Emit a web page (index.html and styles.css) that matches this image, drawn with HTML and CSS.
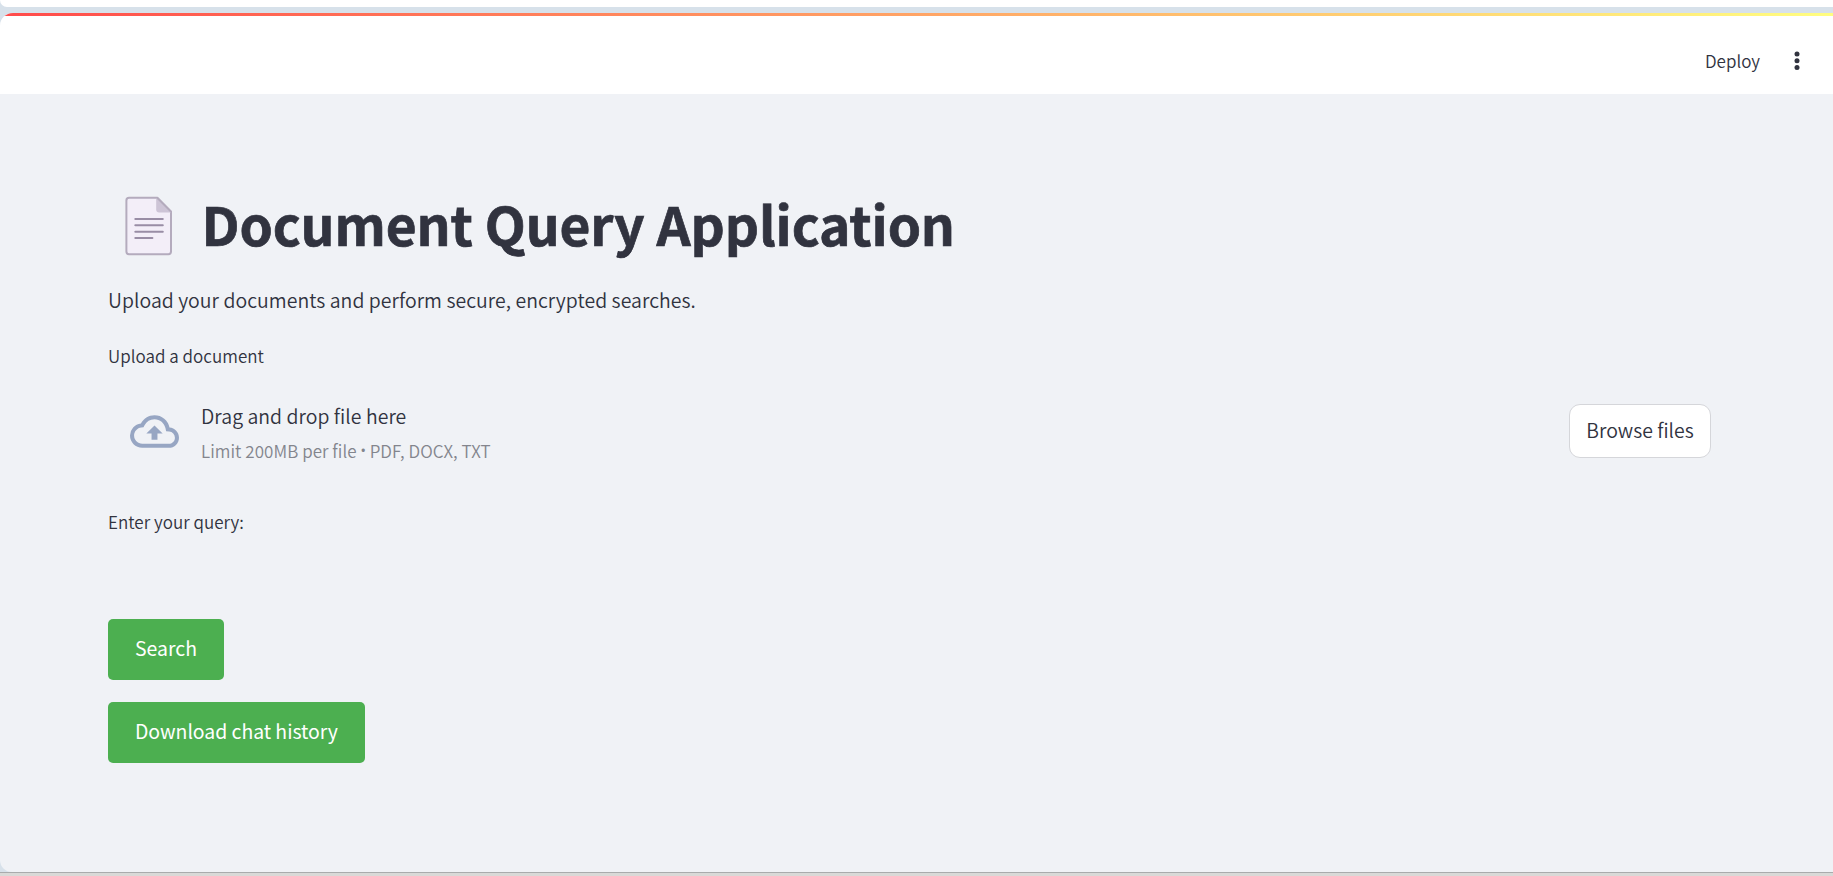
FILE: index.html
```html
<!DOCTYPE html>
<html lang="en">
<head>
<meta charset="utf-8">
<title>Document Query Application</title>
<link rel="stylesheet" href="styles.css">
</head>
<body>
<div class="browser-edge"></div>
<div class="app">
  <div class="decoration"></div>
  <header class="toolbar">
    <span class="deploy">Deploy</span>
    <svg class="menu" viewBox="0 0 6 20"><circle cx="3" cy="3" r="2.5"/><circle cx="3" cy="9.8" r="2.5"/><circle cx="3" cy="16.6" r="2.5"/></svg>
  </header>
  <main class="content">
    <div class="heading">
      <svg class="doc-icon" viewBox="0 0 48 60">
        <path d="M4 1.8H32.2L46 15.6V55.6Q46 58.2 43.4 58.2H4Q1.4 58.2 1.4 55.6V4.4Q1.4 1.8 4 1.8Z" fill="#f3eef8" stroke="#b4abbd" stroke-width="2"/>
        <path d="M31.2 2L46 16.6H34.2Q31.2 16.6 31.2 13.6Z" fill="#cdc4d6"/>
        <path d="M32.2 1.8L46 15.6" stroke="#b4abbd" stroke-width="2"/>
        <path d="M10.3 23H37.8M10.3 29.3H37.8M10.3 35.7H37.8M10.3 42H27.4" stroke="#998da5" stroke-width="2" stroke-linecap="round"/>
      </svg>
      <h1 class="title">Document Query Application</h1>
    </div>
    <p class="subtitle">Upload your documents and perform secure, encrypted searches.</p>
    <label class="label label-upload">Upload a document</label>
    <section class="dropzone">
      <svg class="cloud" viewBox="0 4 24 16"><path d="M19.35 10.04A7.49 7.49 0 0 0 12 4C9.11 4 6.6 5.64 5.35 8.04A5.994 5.994 0 0 0 0 14c0 3.31 2.69 6 6 6h13c2.76 0 5-2.24 5-5 0-2.64-2.05-4.78-4.65-4.96zM19 18H6c-2.21 0-4-1.79-4-4 0-2.05 1.53-3.76 3.56-3.97l1.07-.11.5-.95A5.469 5.469 0 0 1 12 6c2.62 0 4.88 1.86 5.39 4.43l.3 1.5 1.53.11A2.98 2.98 0 0 1 22 15c0 1.65-1.35 3-3 3zM8 13h2.55v3h2.9v-3H16l-4-4z"/></svg>
      <div class="drop-text">
        <span class="drop-title">Drag and drop file here</span>
        <span class="drop-limit">Limit 200MB per file <span class="bullet">•</span> PDF, DOCX, TXT</span>
      </div>
      <button class="browse">Browse files</button>
    </section>
    <label class="label label-query">Enter your query:</label>
    <div class="actions">
      <button class="action search">Search</button>
      <button class="action download">Download chat history</button>
    </div>
  </main>
</div>
<div class="taskbar-edge"></div>
</body>
</html>
```
FILE: styles.css
```css
* { box-sizing: border-box; }
body {
  margin: 0;
  height: 876px;
  overflow: hidden;
  display: flex;
  flex-direction: column;
  background: #d7e1ea;
  color: #31333f;
  font-family: "Noto Sans CJK SC", "Noto Sans", sans-serif;
  font-weight: 350;
}
.browser-edge {
  height: 7px;
  margin-bottom: 6px;
  background: #fff;
  border-radius: 0 0 0 11px;
}
.app {
  height: 859px;
  background: #f0f2f6;
  border-radius: 13px 0 0 12px;
  overflow: hidden;
}
.decoration {
  height: 3px;
  background: linear-gradient(90deg, #ff4b4b, #fffd80);
}
.toolbar {
  height: 78px;
  padding: 33px 33px 0 0;
  background: #fff;
  display: flex;
  justify-content: flex-end;
  align-items: flex-start;
}
.deploy { font-size: 17px; line-height: 24px; margin-right: 34px; }
.menu { width: 6px; height: 20px; margin-top: 2px; fill: #31333f; }
.content { padding: 93px 122px 0 108px; }
.heading { display: flex; height: 72px; }
.doc-icon { width: 48px; height: 60px; margin: 9px 0 0 17px; fill: none; flex: none; }
.title {
  margin: 0 0 0 28.5px;
  font-size: 53.3px;
  line-height: 72px;
  font-weight: 700;
  letter-spacing: -0.14px;
  -webkit-text-stroke: 0.7px #31333f;
  white-space: nowrap;
}
.subtitle { margin: 24px 0 0; font-size: 19.45px; line-height: 34px; letter-spacing: 0.05px; }
.label { display: block; width: fit-content; font-size: 17px; line-height: 24px; letter-spacing: 0.03px; }
.label-upload { margin-top: 27px; }
.dropzone { display: flex; margin-top: 31px; height: 67px; }
.cloud { width: 49px; height: 33px; margin: 16px 22px 0 22px; fill: #97a6c3; flex: none; }
.drop-text { display: flex; flex-direction: column; align-items: flex-start; }
.drop-title { font-size: 19.45px; line-height: 34px; letter-spacing: 0.05px; }
.drop-limit { font-size: 17px; line-height: 28px; margin-top: 4px; letter-spacing: 0.05px; color: #83858d; }
.bullet { font-family: "Open Sans", sans-serif; font-size: 21px; line-height: 1; margin: 0 -1.3px; }
button { font: inherit; border: 0; padding: 0; white-space: nowrap; }
.browse {
  width: 142px;
  height: 54px;
  margin: 5px 0 0 auto;
  padding-bottom: 4px;
  color: #31333f;
  background: #fff;
  border: 1px solid #d5d6da;
  border-radius: 11px;
  font-size: 19.45px;
}
.label-query { margin-top: 44px; }
.actions { display: flex; flex-direction: column; gap: 22px; margin-top: 85px; }
.action {
  height: 61px;
  padding-bottom: 5px;
  background: #4caf50;
  color: #fff;
  border-radius: 5px;
  font-size: 19.45px;
  font-weight: 400;
}
.search { width: 116px; }
.download { width: 257px; letter-spacing: -0.04px; }
.taskbar-edge { height: 4px; background: #d9d9d7; border-top: 1px solid #a9abac; }
```
